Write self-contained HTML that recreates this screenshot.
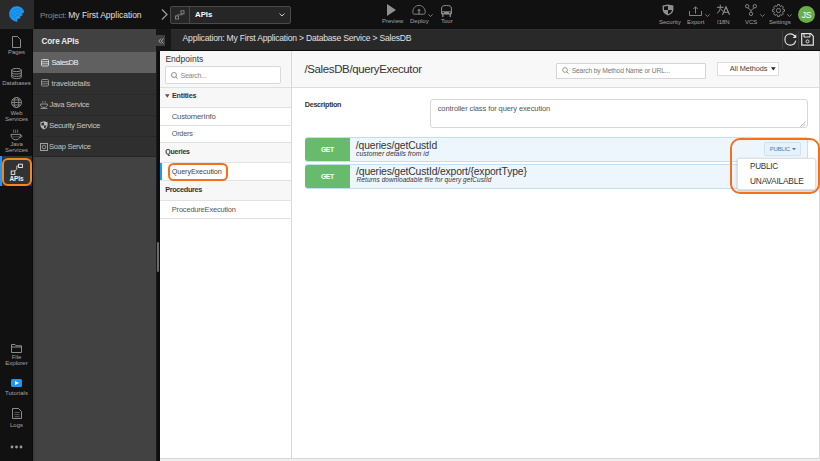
<!DOCTYPE html>
<html><head><meta charset="utf-8">
<style>
*{margin:0;padding:0;box-sizing:border-box}
html,body{width:820px;height:461px;overflow:hidden;background:#eeeeee;font-family:"Liberation Sans",sans-serif}
.a{position:absolute}
.t{position:absolute;white-space:nowrap;line-height:1}
svg{position:absolute;overflow:visible}
.tb{color:#a2a2a2;font-size:6px}
.rl{color:#a4a4a4;font-size:6px;text-align:center;width:33px;left:0}
.pi{color:#d8d8d8;font-size:7.3px}
.ep{color:#555;font-size:7.2px}
.eh{color:#333;font-size:6.8px;font-weight:bold}
</style></head><body>
<!-- TOP BAR -->
<div class="a" style="left:0;top:0;width:820px;height:29px;background:#111"></div>
<div class="a" style="left:0;top:0;width:34px;height:29px;background:#2a2a2a"></div>
<!-- logo -->
<svg style="left:0;top:0" width="33" height="29" viewBox="0 0 33 29">
  <path d="M24.2 12.2 C23.6 8.5 20.5 6.3 16.8 6.3 C12.6 6.3 9.2 9.7 9.2 14 C9.2 17.8 12 21.2 17.6 21.8 C17.2 20.6 17.3 19.6 17.6 18.9 C18.6 18.6 19.8 18.3 20.6 17.9 C20.2 17.3 20 16.8 20.2 16.2 C21 15.9 22 15.5 22.8 15.2 C22.3 14.6 22 14.1 22 13.5 C22.8 13.1 23.6 12.7 24.2 12.2 Z" fill="#1f98f0"/>
  <path d="M11.3 16.5 C11 12 14 9 17.5 9 C20 9 21.8 10.2 22.6 11.6" fill="none" stroke="#1678c8" stroke-width="0.7"/>
  <path d="M13.2 18 C12.8 14.5 15 11.8 18 11.8 C19.6 11.8 20.8 12.5 21.5 13.4" fill="none" stroke="#1678c8" stroke-width="0.7"/>
  <path d="M15 19.5 C14.6 16.8 16.2 14.6 18.5 14.6 C19.2 14.6 19.8 14.8 20.2 15.2" fill="none" stroke="#1678c8" stroke-width="0.7"/>
</svg>

<!-- chevron -->
<svg style="left:161px;top:9px" width="7" height="11" viewBox="0 0 7 11"><path d="M1 0.5 L6 5.5 L1 10.5" fill="none" stroke="#9a9a9a" stroke-width="1.3"/></svg>
<!-- dropdown -->
<div class="a" style="left:170px;top:6px;width:121px;height:18px;background:#262626;border:1px solid #4a4a4a;border-radius:2px"></div>
<div class="a" style="left:189px;top:7px;width:1px;height:16px;background:#4a4a4a"></div>
<svg style="left:175px;top:10px" width="10" height="10" viewBox="0 0 10 10"><rect x="0.5" y="6" width="3" height="3" fill="none" stroke="#888" stroke-width="0.9"/><rect x="6" y="0.8" width="3" height="3" fill="none" stroke="#888" stroke-width="0.9"/><path d="M2 6 C2 3 7.5 6.5 7.5 3.8" fill="none" stroke="#888" stroke-width="0.9"/></svg>
<div class="t" style="left:195px;top:11px;font-size:7.8px;color:#fff;font-weight:bold">APIs</div>
<svg style="left:279px;top:13px" width="6" height="4" viewBox="0 0 6 4"><path d="M0.5 0.5 L3 3 L5.5 0.5" fill="none" stroke="#ccc" stroke-width="1"/></svg>

<!-- toolbar center -->
<svg style="left:387px;top:4px" width="9" height="12" viewBox="0 0 9 12"><path d="M0 0 L9 6 L0 12Z" fill="#8f8f8f"/></svg>
<div class="t tb" style="left:382px;top:18px">Preview</div>
<svg style="left:412px;top:4px" width="14" height="11" viewBox="0 0 14 11"><path d="M2.3 10.2 C1.2 10.2 0.8 9.4 0.8 8.2 C0.8 4.3 3.5 1.4 7 1.4 C10.5 1.4 13.2 4.3 13.2 8.2 C13.2 9.4 12.8 10.2 11.7 10.2Z" fill="none" stroke="#8f8f8f" stroke-width="0.9"/><path d="M7 10 L7 6.5" stroke="#8f8f8f" stroke-width="1"/><path d="M5.2 6.8 L7 4.8 L8.8 6.8Z" fill="#8f8f8f"/></svg>
<svg style="left:428px;top:14.3px" width="5" height="3" viewBox="0 0 5 3"><path d="M0.3 0.3 L2.5 2.5 L4.7 0.3" fill="none" stroke="#8f8f8f" stroke-width="0.8"/></svg>
<div class="t tb" style="left:410px;top:18px">Deploy</div>
<svg style="left:441px;top:4.5px" width="11" height="12.5" viewBox="0 0 11 12.5"><path d="M0.6 9 L0.6 3 C0.6 1.3 2 0.5 5.5 0.5 C9 0.5 10.4 1.3 10.4 3 L10.4 9Z" fill="none" stroke="#8f8f8f" stroke-width="1"/><path d="M0.6 6.3 L10.4 6.3 L10.4 9 L0.6 9Z" fill="#8f8f8f"/><rect x="1.5" y="7" width="1.5" height="1.2" fill="#222"/><rect x="8" y="7" width="1.5" height="1.2" fill="#222"/><path d="M1.8 9 L1.8 12 M9.2 9 L9.2 12" stroke="#8f8f8f" stroke-width="1.3"/></svg>
<div class="t tb" style="left:441px;top:18px">Tour</div>

<!-- toolbar right -->
<svg style="left:662px;top:4px" width="12" height="12" viewBox="0 0 12 12"><path d="M0.6 1.5 L6 0.5 L11.4 1.5 L11.4 5.5 C11.4 8.5 9 10.5 6 11.5 C3 10.5 0.6 8.5 0.6 5.5Z" fill="#8f8f8f"/><path d="M2 2.6 L6 2 L6 6 L2 6Z M6 6 L10 6 C9.8 8 8.3 9.3 6 10.1Z" fill="#111"/></svg>
<div class="t tb" style="left:659px;top:18.5px">Security</div>
<svg style="left:689px;top:6px" width="13" height="10" viewBox="0 0 13 10"><path d="M0.5 5 L0.5 9.5 L12.5 9.5 L12.5 5" fill="none" stroke="#8f8f8f" stroke-width="0.9"/><path d="M6.5 7.5 L6.5 0.8 M4.3 3 L6.5 0.8 L8.7 3" fill="none" stroke="#8f8f8f" stroke-width="0.9"/></svg>
<svg style="left:705px;top:14px" width="5" height="3" viewBox="0 0 5 3"><path d="M0.3 0.3 L2.5 2.5 L4.7 0.3" fill="none" stroke="#8f8f8f" stroke-width="0.8"/></svg>
<div class="t tb" style="left:687px;top:18.5px">Export</div>
<svg style="left:712px;top:2px" width="22" height="16" viewBox="712 2 22 16"><path d="M717 7.3 L723.6 7.3 M720.3 4.8 L720.3 7.3 M720.3 7.6 C720.1 10 719.2 12 717.1 13.3 M720.7 9 L723.2 11.4" fill="none" stroke="#939393" stroke-width="1"/><path d="M722.5 14.7 L726 6.9 L729.6 14.7 M723.7 12.2 L728.4 12.2" fill="none" stroke="#939393" stroke-width="1.1"/></svg>
<div class="t tb" style="left:717px;top:18.5px">I18N</div>
<svg style="left:745px;top:4px" width="12" height="12" viewBox="0 0 12 12"><circle cx="2.2" cy="2.2" r="1.7" fill="none" stroke="#8f8f8f" stroke-width="0.9"/><circle cx="9.8" cy="2.2" r="1.7" fill="none" stroke="#8f8f8f" stroke-width="0.9"/><circle cx="6" cy="9.8" r="1.7" fill="none" stroke="#8f8f8f" stroke-width="0.9"/><path d="M2.8 3.8 L6 6.5 L9.2 3.8 M6 6.5 L6 8.1" fill="none" stroke="#8f8f8f" stroke-width="0.9"/></svg>
<svg style="left:760px;top:14px" width="5" height="3" viewBox="0 0 5 3"><path d="M0.3 0.3 L2.5 2.5 L4.7 0.3" fill="none" stroke="#8f8f8f" stroke-width="0.8"/></svg>
<div class="t tb" style="left:745px;top:18.5px">VCS</div>
<svg style="left:772px;top:3.8px" width="13" height="13" viewBox="0 0 13 13"><path d="M10.92 5.23 L12.41 5.48 L12.41 7.52 L10.92 7.77 L10.52 8.73 L11.40 9.96 L9.96 11.40 L8.73 10.52 L7.77 10.92 L7.52 12.41 L5.48 12.41 L5.23 10.92 L4.27 10.52 L3.04 11.40 L1.60 9.96 L2.48 8.73 L2.08 7.77 L0.59 7.52 L0.59 5.48 L2.08 5.23 L2.48 4.27 L1.60 3.04 L3.04 1.60 L4.27 2.48 L5.23 2.08 L5.48 0.59 L7.52 0.59 L7.77 2.08 L8.73 2.48 L9.96 1.60 L11.40 3.04 L10.52 4.27Z" fill="none" stroke="#8f8f8f" stroke-width="0.9" stroke-linejoin="round"/><circle cx="6.5" cy="6.5" r="2.1" fill="none" stroke="#8f8f8f" stroke-width="0.9"/></svg>
<svg style="left:787px;top:14px" width="5" height="3" viewBox="0 0 5 3"><path d="M0.3 0.3 L2.5 2.5 L4.7 0.3" fill="none" stroke="#8f8f8f" stroke-width="0.8"/></svg>
<div class="t tb" style="left:769px;top:18.5px">Settings</div>
<div class="a" style="left:798px;top:6px;width:17px;height:17px;border-radius:50%;background:#6aad4b"></div>
<div class="t" style="left:798px;top:10.5px;width:17px;text-align:center;font-size:8.5px;color:#fff;letter-spacing:-0.2px">JS</div>

<!-- LEFT RAIL -->
<div class="a" style="left:0;top:29px;width:33px;height:432px;background:#111"></div>

<!-- rail icons -->
<svg style="left:12px;top:36px" width="9" height="12" viewBox="0 0 9 12"><path d="M0.5 0.5 L5.5 0.5 L8.5 3.5 L8.5 11.5 L0.5 11.5Z" fill="none" stroke="#9a9a9a" stroke-width="0.9"/></svg>
<div class="t rl" style="top:48.5px">Pages</div>
<svg style="left:11px;top:68px" width="11" height="11" viewBox="0 0 11 11"><ellipse cx="5.5" cy="2" rx="4.8" ry="1.6" fill="none" stroke="#9a9a9a" stroke-width="0.9"/><path d="M0.7 2 L0.7 9 C0.7 10 3 10.6 5.5 10.6 C8 10.6 10.3 10 10.3 9 L10.3 2 M0.7 4.5 C0.7 5.5 3 6 5.5 6 C8 6 10.3 5.5 10.3 4.5 M0.7 7 C0.7 8 3 8.4 5.5 8.4 C8 8.4 10.3 8 10.3 7" fill="none" stroke="#9a9a9a" stroke-width="0.9"/></svg>
<div class="t rl" style="top:80px">Databases</div>
<svg style="left:11px;top:96.5px" width="11" height="11" viewBox="0 0 11 11"><circle cx="5.5" cy="5.5" r="5" fill="none" stroke="#9a9a9a" stroke-width="0.8"/><ellipse cx="5.5" cy="5.5" rx="2.3" ry="5" fill="none" stroke="#9a9a9a" stroke-width="0.8"/><path d="M0.5 5.5 L10.5 5.5 M1.3 3 L9.7 3 M1.3 8 L9.7 8" stroke="#9a9a9a" stroke-width="0.8"/></svg>
<div class="t rl" style="top:109.5px">Web</div>
<div class="t rl" style="top:115.5px">Services</div>
<svg style="left:10px;top:128.5px" width="13" height="12" viewBox="0 0 13 12"><path d="M3.6 0.6 C3.1 1.5 4.1 2.2 3.6 3.8 M5.6 0.6 C5.1 1.5 6.1 2.2 5.6 3.8 M7.6 0.6 C7.1 1.5 8.1 2.2 7.6 3.8" fill="none" stroke="#9a9a9a" stroke-width="0.75"/><path d="M1 5.4 L10.6 5.4 C10.6 8.8 8.5 10.8 5.8 10.8 C3.1 10.8 1 8.8 1 5.4Z" fill="none" stroke="#9a9a9a" stroke-width="0.9"/><path d="M10.5 6 C12.4 6 12.4 8.4 9.9 8.4" fill="none" stroke="#9a9a9a" stroke-width="0.8"/><path d="M2.5 7.3 C4 8.3 7.6 8.3 9.1 7.3" fill="none" stroke="#777" stroke-width="0.6"/></svg>
<div class="t rl" style="top:141px">Java</div>
<div class="t rl" style="top:147px">Services</div>
<!-- APIs selected -->
<div class="a" style="left:0;top:156px;width:32px;height:30px;background:#333"></div>
<div class="a" style="left:0;top:156px;width:1.5px;height:29.5px;background:#2196f3"></div>
<div class="a" style="left:1.7px;top:158.2px;width:30.3px;height:27.4px;border:2px solid #f5861f;border-radius:6px"></div>
<svg style="left:10px;top:163px" width="14" height="13" viewBox="0 0 14 13"><rect x="1.2" y="8" width="3.6" height="3.4" fill="none" stroke="#f0f0f0" stroke-width="0.9"/><rect x="8.6" y="1.2" width="3.8" height="3.3" fill="none" stroke="#f0f0f0" stroke-width="0.9"/><path d="M4.8 8 L6.8 6 L6.8 3 L8.6 2.8" fill="none" stroke="#e0e0e0" stroke-width="0.8"/></svg>
<div class="t" style="left:0;top:175.5px;width:33px;text-align:center;font-size:6.4px;color:#f4f4f4;font-weight:bold;letter-spacing:-0.1px">APIs</div>

<svg style="left:11px;top:343.5px" width="11" height="9" viewBox="0 0 11 9"><path d="M0.5 0.5 L4 0.5 L5 1.8 L10.5 1.8 L10.5 8.5 L0.5 8.5Z M0.5 3 L10.5 3" fill="none" stroke="#9a9a9a" stroke-width="0.9"/></svg>
<div class="t rl" style="top:354px">File</div>
<div class="t rl" style="top:360px">Explorer</div>
<div class="a" style="left:11px;top:379px;width:11px;height:8px;background:#2196f3;border-radius:1.5px"></div>
<svg style="left:15px;top:381px" width="4" height="4" viewBox="0 0 4 4"><path d="M0 0 L4 2 L0 4Z" fill="#fff"/></svg>
<div class="t rl" style="top:389.5px">Tutorials</div>
<svg style="left:12px;top:407.5px" width="10" height="11" viewBox="0 0 10 11"><path d="M0.5 0.5 L6.5 0.5 L9.5 3.5 L9.5 10.5 L0.5 10.5Z" fill="none" stroke="#9a9a9a" stroke-width="0.9"/><path d="M2.5 4.5 L7.5 4.5 M2.5 6.6 L7.5 6.6 M2.5 8.7 L7.5 8.7" fill="none" stroke="#8a8a8a" stroke-width="0.6"/></svg>
<div class="t rl" style="top:421.5px">Logs</div>
<svg style="left:10px;top:445px" width="13" height="4" viewBox="0 0 13 4"><circle cx="2" cy="2" r="1.4" fill="#9a9a9a"/><circle cx="6.5" cy="2" r="1.4" fill="#9a9a9a"/><circle cx="11" cy="2" r="1.4" fill="#9a9a9a"/></svg>


<div class="t" style="left:40.00px;top:12.00px;font-size:8.12px;letter-spacing:-0.129px;color:#8a8a8a;font-weight:normal;font-style:normal;">Project:</div>
<div class="t" style="left:68.30px;top:11.00px;font-size:8.50px;letter-spacing:-0.022px;color:#e0e0e0;font-weight:normal;font-style:normal;">My First Application</div>
<!-- CORE APIs panel -->
<div class="a" style="left:32px;top:29px;width:124px;height:432px;background:#424242;border-left:1px solid #0a0a0a"></div>
<div class="a" style="left:33px;top:157px;width:1.5px;height:304px;background:#3b3b3b"></div>
<div class="a" style="left:33px;top:29px;width:123px;height:23px;background:#414141"></div>
<div class="a" style="left:33px;top:52px;width:123px;height:105px;background:#2f2f2f"></div>
<div class="a" style="left:33px;top:52px;width:123px;height:21px;background:#606060"></div>
<div class="a" style="left:34px;top:93.5px;width:122px;height:1px;background:#292929"></div>
<div class="a" style="left:34px;top:114.5px;width:122px;height:1px;background:#292929"></div>
<div class="a" style="left:34px;top:135.5px;width:122px;height:1px;background:#292929"></div>
<div class="a" style="left:34px;top:156px;width:122px;height:1px;background:#262626"></div>

<div class="t" style="left:41.60px;top:38.00px;font-size:8.15px;letter-spacing:-0.150px;color:#eaeaea;font-weight:bold;font-style:normal;">Core APIs</div>
<svg style="left:41px;top:58.5px" width="8" height="7.5" viewBox="0 0 8 7.5"><rect x="0.5" y="0.5" width="7" height="6.5" rx="1" fill="none" stroke="#ddd" stroke-width="0.9"/><path d="M0.5 2.7 L7.5 2.7 M0.5 4.8 L7.5 4.8" stroke="#ddd" stroke-width="0.8"/></svg>
<div class="t" style="left:51.40px;top:59.00px;font-size:7.67px;letter-spacing:-0.418px;color:#f2f2f2;font-weight:normal;font-style:normal;">SalesDB</div>
<svg style="left:41px;top:79px" width="8" height="7.5" viewBox="0 0 8 7.5"><rect x="0.5" y="0.5" width="7" height="6.5" rx="1" fill="none" stroke="#999" stroke-width="0.9"/><path d="M0.5 2.7 L7.5 2.7 M0.5 4.8 L7.5 4.8" stroke="#999" stroke-width="0.8"/></svg>
<div class="t" style="left:51.60px;top:80.00px;font-size:7.65px;letter-spacing:-0.173px;color:#c4c4c4;font-weight:normal;font-style:normal;">traveldetails</div>
<svg style="left:40px;top:100.5px" width="8" height="8" viewBox="0 0 8 8"><path d="M2.5 0.3 L2.5 1.5 M4 0.3 L4 1.5 M5.5 0.3 L5.5 1.5" stroke="#aaa" stroke-width="0.6"/><path d="M0.5 3 L7.5 3 C7.5 5.5 6 6.5 4 6.5 C2 6.5 0.5 5.5 0.5 3Z M0.5 7.5 L7.5 7.5" fill="none" stroke="#aaa" stroke-width="0.8"/></svg>
<div class="t" style="left:49.40px;top:101.00px;font-size:7.58px;letter-spacing:-0.293px;color:#c4c4c4;font-weight:normal;font-style:normal;">Java Service</div>
<svg style="left:40px;top:120.5px" width="8" height="9" viewBox="0 0 8 9"><path d="M0.4 1.2 L4 0.3 L7.6 1.2 L7.6 4 C7.6 6.3 6 7.8 4 8.6 C2 7.8 0.4 6.3 0.4 4Z" fill="#bbb"/><path d="M1.5 2 L4 1.5 L4 4.5 L1.5 4.5Z M4 4.5 L6.5 4.5 C6.3 6 5.3 7 4 7.5Z" fill="#2f2f2f"/></svg>
<div class="t" style="left:49.00px;top:122.00px;font-size:7.85px;letter-spacing:-0.350px;color:#c4c4c4;font-weight:normal;font-style:normal;">Security Service</div>
<svg style="left:40px;top:142.5px" width="8" height="8" viewBox="0 0 8 8"><rect x="0.5" y="0.5" width="7" height="7" fill="none" stroke="#aaa" stroke-width="0.9"/><circle cx="4" cy="4" r="1.8" fill="none" stroke="#aaa" stroke-width="0.8"/></svg>
<div class="t" style="left:49.00px;top:143.00px;font-size:7.55px;letter-spacing:-0.267px;color:#c4c4c4;font-weight:normal;font-style:normal;">Soap Service</div>

<!-- splitter -->
<div class="a" style="left:156px;top:29px;width:4px;height:432px;background:#0e0e0e;border-left:1px solid #1c1c1c"></div>
<div class="a" style="left:156.5px;top:242px;width:2px;height:30px;background:#6a6a6a;border-radius:1px"></div>

<!-- BREADCRUMB -->
<div class="a" style="left:156px;top:29px;width:664px;height:22px;background:#292929;border-top:1px solid #303030;border-bottom:1px solid #0c0c0c"></div>
<div class="a" style="left:156px;top:29px;width:15px;height:22px;background:#161616"></div>
<div class="a" style="left:156px;top:35px;width:9px;height:11px;background:#404040"></div>
<svg style="left:158px;top:37.5px" width="6" height="6" viewBox="0 0 6 6"><path d="M3 0.5 L0.8 3 L3 5.5 M5.5 0.5 L3.3 3 L5.5 5.5" fill="none" stroke="#bbb" stroke-width="0.8"/></svg>

<div class="t" style="left:182.60px;top:34.00px;font-size:8.59px;letter-spacing:-0.209px;color:#e0e0e0;font-weight:normal;font-style:normal;">Application: My First Application &gt; Database Service &gt; SalesDB</div>

<div class="a" style="left:782px;top:31px;width:1px;height:18px;background:#3c3c3c"></div>
<div class="a" style="left:798px;top:31px;width:1px;height:18px;background:#3c3c3c"></div>
<svg style="left:784px;top:32.5px" width="13" height="13" viewBox="0 0 13 13"><path d="M11.3 4.2 C10.4 2.1 8.5 0.9 6.3 0.9 C3.2 0.9 0.9 3.3 0.9 6.5 C0.9 9.7 3.2 12.1 6.3 12.1 C9 12.1 11.2 10.2 11.7 7.7" fill="none" stroke="#e2e2e2" stroke-width="1.15"/><path d="M12.3 1.2 L12.3 5 L8.6 5Z" fill="#e2e2e2"/></svg>
<svg style="left:800.5px;top:32.8px" width="13" height="13" viewBox="0 0 13 13"><path d="M0.7 0.7 L9.8 0.7 L12.3 3.2 L12.3 12.2 L0.7 12.2Z" fill="none" stroke="#e2e2e2" stroke-width="1.2"/><path d="M3 0.7 L3 4 L9 4 L9 0.7" fill="none" stroke="#e2e2e2" stroke-width="1"/><circle cx="6.5" cy="8.4" r="1.5" fill="none" stroke="#e2e2e2" stroke-width="1"/></svg>

<!-- CONTENT -->
<div class="a" style="left:160px;top:51px;width:660px;height:410px;background:#efefef"></div>
<div class="a" style="left:160px;top:51px;width:660px;height:408px;background:#fff;border-right:1px solid #d8d8d8;border-bottom:1px solid #d8d8d8"></div>
<!-- endpoints panel -->
<div class="a" style="left:160px;top:51px;width:131px;height:37px;background:#f7f7f7;border-bottom:1px solid #dedede"></div>
<div class="a" style="left:291px;top:51px;width:1px;height:407px;background:#d8d8d8"></div>

<div class="t" style="left:165.40px;top:55.00px;font-size:8.49px;letter-spacing:0.028px;color:#333;font-weight:normal;font-style:normal;">Endpoints</div>
<div class="a" style="left:165px;top:66px;width:116px;height:17.5px;background:#fff;border:1px solid #d9d9d9;border-radius:2px"></div>
<svg style="left:171px;top:71.5px" width="7" height="7" viewBox="0 0 7 7"><circle cx="3" cy="3" r="2.5" fill="none" stroke="#777" stroke-width="0.8"/><path d="M4.8 4.8 L6.6 6.6" stroke="#777" stroke-width="0.9"/></svg>
<div class="t" style="left:180.60px;top:72.00px;font-size:7.02px;letter-spacing:-0.289px;color:#888;font-weight:normal;font-style:normal;">Search...</div>
<div class="a" style="left:160px;top:88px;width:131px;height:19.5px;background:#f7f7f7;border-bottom:1px solid #e2e2e2"></div>
<svg style="left:164.8px;top:93.6px" width="4.6" height="4" viewBox="0 0 4.6 4"><path d="M0 0.2 L4.6 0.2 L2.3 3.8Z" fill="#555"/></svg>
<div class="a" style="left:160px;top:125px;width:131px;height:1px;background:#e2e2e2"></div>
<div class="a" style="left:160px;top:142px;width:131px;height:20.5px;background:#f7f7f7;border-top:1px solid #e2e2e2;border-bottom:1px solid #e2e2e2"></div>
<div class="a" style="left:160px;top:163px;width:1.5px;height:17px;background:#2196f3"></div>
<div class="a" style="left:160px;top:180px;width:131px;height:20.5px;background:#f7f7f7;border-top:1px solid #e2e2e2;border-bottom:1px solid #e2e2e2"></div>
<div class="a" style="left:160px;top:217.5px;width:131px;height:1px;background:#e2e2e2"></div>

<div class="t" style="left:172.00px;top:93.00px;font-size:7.16px;letter-spacing:-0.207px;color:#333;font-weight:bold;font-style:normal;">Entities</div>
<div class="t" style="left:171.70px;top:113.00px;font-size:7.75px;letter-spacing:-0.227px;color:#555;font-weight:normal;font-style:normal;">CustomerInfo</div>
<div class="t" style="left:171.70px;top:130.00px;font-size:7.28px;letter-spacing:-0.192px;color:#555;font-weight:normal;font-style:normal;">Orders</div>
<div class="t" style="left:165.20px;top:148.00px;font-size:6.99px;letter-spacing:-0.203px;color:#333;font-weight:bold;font-style:normal;">Queries</div>
<div class="t" style="left:171.80px;top:168.00px;font-size:7.22px;letter-spacing:-0.114px;color:#444;font-weight:normal;font-style:normal;">QueryExecution</div>
<div class="t" style="left:165.20px;top:186.00px;font-size:7.33px;letter-spacing:-0.351px;color:#333;font-weight:bold;font-style:normal;">Procedures</div>
<div class="t" style="left:171.80px;top:206.00px;font-size:7.46px;letter-spacing:-0.178px;color:#555;font-weight:normal;font-style:normal;">ProcedureExecution</div>

<!-- main header -->
<div class="a" style="left:292px;top:51px;width:527px;height:37px;background:#f8f8f8;border-bottom:1px solid #dcdcdc"></div>
<div class="a" style="left:556px;top:62.5px;width:150px;height:16px;background:#fff;border:1px solid #d5d5d5;border-radius:1px"></div>
<svg style="left:562px;top:67px" width="7" height="7" viewBox="0 0 7 7"><circle cx="3" cy="3" r="2.4" fill="none" stroke="#777" stroke-width="0.7"/><path d="M4.7 4.7 L6.6 6.6" stroke="#777" stroke-width="0.8"/></svg>
<div class="a" style="left:717px;top:62px;width:62px;height:14px;background:#fff;border:1px solid #dcdcdc"></div>
<svg style="left:771.3px;top:67px" width="4.6" height="3.8" viewBox="0 0 4.6 3.8"><path d="M0 0.2 L4.6 0.2 L2.3 3.6Z" fill="#222"/></svg>
<div class="a" style="left:430px;top:99.2px;width:377.5px;height:29.3px;background:#fff;border:1px solid #d8d8d8;border-radius:3px"></div>
<svg style="left:800px;top:121px" width="6" height="6" viewBox="0 0 6 6"><path d="M0.5 5.5 L5.5 0.5 M3 5.5 L5.5 3" stroke="#999" stroke-width="0.7"/></svg>

<div class="t" style="left:304.40px;top:64.00px;font-size:11.46px;letter-spacing:-0.340px;color:#333;font-weight:normal;font-style:normal;">/SalesDB/queryExecutor</div>
<div class="t" style="left:571.70px;top:68.00px;font-size:6.69px;letter-spacing:-0.141px;color:#777;font-weight:normal;font-style:normal;">Search by Method Name or URL...</div>
<div class="t" style="left:729.80px;top:65.00px;font-size:7.33px;letter-spacing:-0.072px;color:#444;font-weight:normal;font-style:normal;">All Methods</div>
<div class="t" style="left:304.75px;top:101.00px;font-size:7.26px;letter-spacing:-0.317px;color:#333;font-weight:bold;font-style:normal;">Description</div>
<div class="t" style="left:437.70px;top:105.00px;font-size:7.51px;letter-spacing:-0.096px;color:#555;font-weight:normal;font-style:normal;">controller class for query execution</div>

<!-- rows -->
<div class="a" style="left:304.5px;top:137px;width:503px;height:25px;background:#eef6fd;border:1px solid #bfe0f6;border-radius:2px"></div>
<div class="a" style="left:305px;top:137.8px;width:45px;height:23.7px;background:#68bb6c;border-radius:3px 0 0 3px"></div>
<div class="a" style="left:304.5px;top:164px;width:503px;height:24.5px;background:#eef6fd;border:1px solid #bfe0f6;border-radius:2px"></div>
<div class="a" style="left:305px;top:164.5px;width:45px;height:23.5px;background:#68bb6c;border-radius:3px 0 0 3px"></div>

<div class="t" style="left:321.00px;top:147.00px;font-size:6.73px;letter-spacing:-0.378px;color:#fff;font-weight:bold;font-style:normal;">GET</div>
<div class="t" style="left:321.00px;top:174.00px;font-size:6.85px;letter-spacing:-0.458px;color:#fff;font-weight:bold;font-style:normal;">GET</div>
<div class="t" style="left:355.85px;top:141.00px;font-size:10.32px;letter-spacing:-0.132px;color:#333;font-weight:normal;font-style:normal;">/queries/getCustId</div>
<div class="t" style="left:356.10px;top:151.00px;font-size:6.75px;letter-spacing:0.040px;color:#333;font-weight:normal;font-style:italic;">customer details from id</div>
<div class="t" style="left:356.10px;top:167.00px;font-size:10.38px;letter-spacing:-0.170px;color:#333;font-weight:normal;font-style:normal;">/queries/getCustId/export/{exportType}</div>
<div class="t" style="left:356.60px;top:177.00px;font-size:6.49px;letter-spacing:0.074px;color:#333;font-weight:normal;font-style:italic;">Returns downloadable file for query getCustId</div>

<!-- public button & menu -->
<div class="a" style="left:764px;top:142px;width:37px;height:13.5px;background:#e6f1fa;border:1px solid #cfe2f1;border-radius:2px"></div>
<svg style="left:792px;top:147.6px" width="4" height="2.5" viewBox="0 0 4 2.5"><path d="M0 0 L4 0 L2 2.3Z" fill="#3f7fbf"/></svg>
<div class="a" style="left:736.8px;top:158px;width:79.7px;height:32px;background:#fff;border:1px solid #e0e0e0;border-radius:2px;box-shadow:0 1.5px 3px rgba(0,0,0,0.22)"></div>

<div class="t" style="left:769.80px;top:146.00px;font-size:6.01px;letter-spacing:-0.270px;color:#3f7fbf;font-weight:normal;font-style:normal;">PUBLIC</div>
<div class="t" style="left:750.00px;top:163.00px;font-size:8.14px;letter-spacing:-0.234px;color:#333;font-weight:normal;font-style:normal;">PUBLIC</div>
<div class="t" style="left:750.00px;top:177.00px;font-size:8.35px;letter-spacing:-0.211px;color:#333;font-weight:normal;font-style:normal;">UNAVAILABLE</div>

<div class="a" style="left:730px;top:138px;width:89.5px;height:56px;border:2px solid #f5701e;border-radius:10px"></div>
<div class="a" style="left:168px;top:163px;width:60px;height:18.3px;border:2px solid #f5701e;border-radius:5.5px"></div>
</body></html>
